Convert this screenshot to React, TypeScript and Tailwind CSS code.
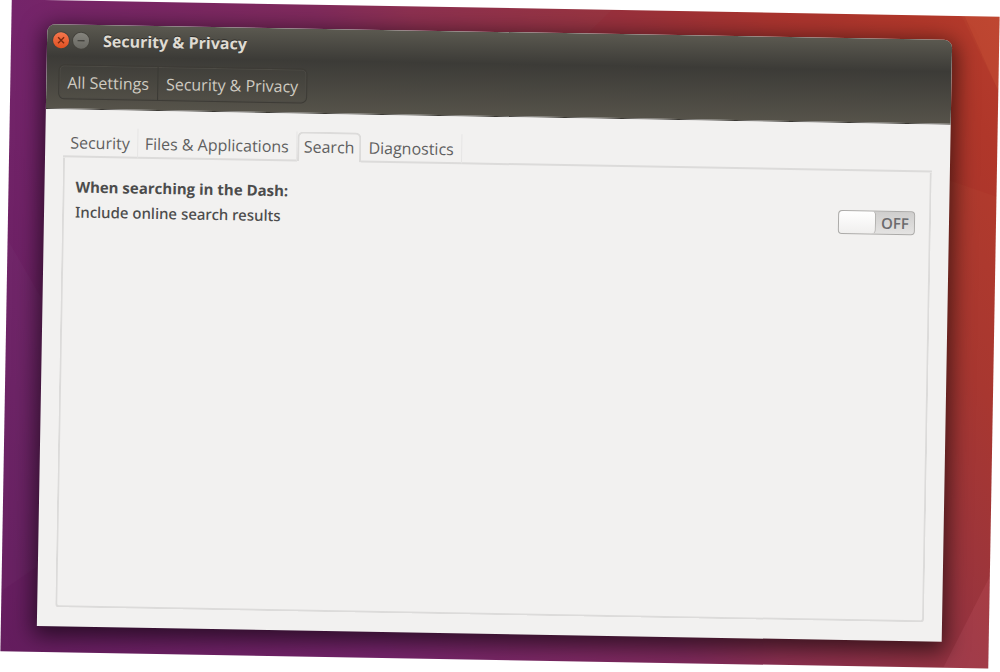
import { useState } from "react";

const TABS = ["Security", "Files & Applications", "Search", "Diagnostics"];

function Wallpaper() {
  return (
    <svg
      className="absolute inset-0 h-full w-full"
      viewBox="0 0 988 652"
      preserveAspectRatio="none"
      aria-hidden="true"
    >
      <polygon points="600,0 950,0 988,74 988,180 560,40" fill="#9a0010" opacity="0.06" />
      <polygon points="953,0 988,0 988,74" fill="#ff8a50" opacity="0.1" />
      <polygon points="988,560 988,652 943,652" fill="#ff8a9a" opacity="0.1" />
      <polygon points="0,592 36,566 36,300 0,240" fill="#ffffff" opacity="0.02" />
    </svg>
  );
}

function TitleBar() {
  return (
    <div className="flex h-8 items-center pl-1.5">
      <button
        aria-label="Close"
        className="mr-1 size-4 rounded-full bg-linear-to-b from-[#f4764c] to-[#e2501f] shadow-[0_0_0_1px_#45433d]"
      >
        <svg viewBox="0 0 16 16" fill="none" stroke="#7a2a10" strokeWidth="1.4">
          <path d="M5 5l6 6M11 5l-6 6" />
        </svg>
      </button>
      <button
        aria-label="Minimize"
        className="mr-3.5 size-4 rounded-full bg-linear-to-b from-[#85847d] to-[#6a6963] shadow-[0_0_0_1px_#45433d]"
      >
        <svg viewBox="0 0 16 16" fill="none" stroke="#44433e" strokeWidth="1.4">
          <path d="M4.5 8h7" />
        </svg>
      </button>
      <h1 className="text-base font-bold text-[#dfdbd2] [text-shadow:0_-1px_0_#2d2c28]">
        Security &amp; Privacy
      </h1>
    </div>
  );
}

function Toolbar() {
  return (
    <div className="px-3 pt-2 pb-[9px]">
      <nav className="flex h-[35px] w-fit items-stretch rounded-md border border-[#3d3b36] text-base font-medium text-[#cfcbc1] shadow-[inset_0_0_0_1px_#4e4c46]">
        <button className="border-r border-[#3b3a35] px-2">All Settings</button>
        <button className="px-2">Security &amp; Privacy</button>
      </nav>
    </div>
  );
}

function Switch({ id }: { id: string }) {
  const [on, setOn] = useState(false);

  return (
    <label className="relative flex h-6 w-[77px] shrink-0 rounded border border-[#acaba9] bg-linear-to-b from-[#cfcecd] to-[#e4e3e2] text-[15px] text-[#6b6b6e]">
      <input
        id={id}
        type="checkbox"
        role="switch"
        checked={on}
        onChange={(e) => setOn(e.target.checked)}
        className="sr-only"
      />
      <span
        className={`w-[37px] rounded border-r border-[#b4b3b1] bg-linear-to-b from-white to-[#f0efee] ${on ? "order-last" : ""}`}
      />
      <span className="flex flex-1 items-center justify-center font-semibold">
        {on ? "ON" : "OFF"}
      </span>
    </label>
  );
}

function Tabs({ active, onChange }: { active: string; onChange: (tab: string) => void }) {
  return (
    <div role="tablist" className="flex h-[30px] text-base font-medium text-[#5f5f5f]">
      {TABS.map((tab) => (
        <button
          key={tab}
          role="tab"
          aria-selected={tab === active}
          onClick={() => onChange(tab)}
          className={
            tab === active
              ? "rounded-t-md border-2 border-b-0 border-[#dcdbda] px-[5px] pb-0.5"
              : "border-r border-b-2 border-[#dcdbda] border-r-[#e6e5e4] px-[7px] pt-0.5"
          }
        >
          {tab}
        </button>
      ))}
      <div className="flex-1 border-b-2 border-[#dcdbda]" />
    </div>
  );
}

export default function App() {
  const [active, setActive] = useState("Search");

  return (
    <div className="flex min-h-screen flex-col overflow-hidden bg-white px-1.5 pt-2 pb-3 font-['Open_Sans','Noto_Sans',sans-serif]">
      <div className="relative flex flex-1 rotate-1 flex-col overflow-hidden bg-[linear-gradient(59deg,#641d5e_0%,#74246a_28%,#7f2a5c_50%,#8c3050_57%,#98343f_72%,#a83730_83%,#b23b2c_94%,#b8402e_100%)] pt-6 pr-[47px] pb-[26px] pl-9">
        <Wallpaper />
        <main className="relative flex flex-1 flex-col rounded-t-lg bg-[#f2f1f0] shadow-[0_6px_22px_4px_rgba(0,0,0,0.6)]">
          <header className="rounded-t-lg border-b border-[#3a3833] bg-linear-to-b from-[#5b5950] via-[#3c3b37] via-38% to-[#56534a]">
            <TitleBar />
            <Toolbar />
          </header>
          <div className="flex flex-1 flex-col px-[18px] pt-[18px] pb-[19px]">
            <Tabs active={active} onChange={setActive} />
            <section
              role="tabpanel"
              className="flex-1 rounded-b border-2 border-t-0 border-[#dcdbda] pt-[17px] pr-3.5 pl-[11px]"
            >
              {active === "Search" && (
                <div className="flex items-end justify-between text-[15px] leading-[25px] text-[#4c4c4c]">
                  <div>
                    <h2 className="font-bold">When searching in the Dash:</h2>
                    <label
                      htmlFor="online-results"
                      className="font-['Noto_Sans',sans-serif] font-medium"
                    >
                      Include online search results
                    </label>
                  </div>
                  <div className="mb-1">
                    <Switch id="online-results" />
                  </div>
                </div>
              )}
            </section>
          </div>
        </main>
      </div>
    </div>
  );
}
